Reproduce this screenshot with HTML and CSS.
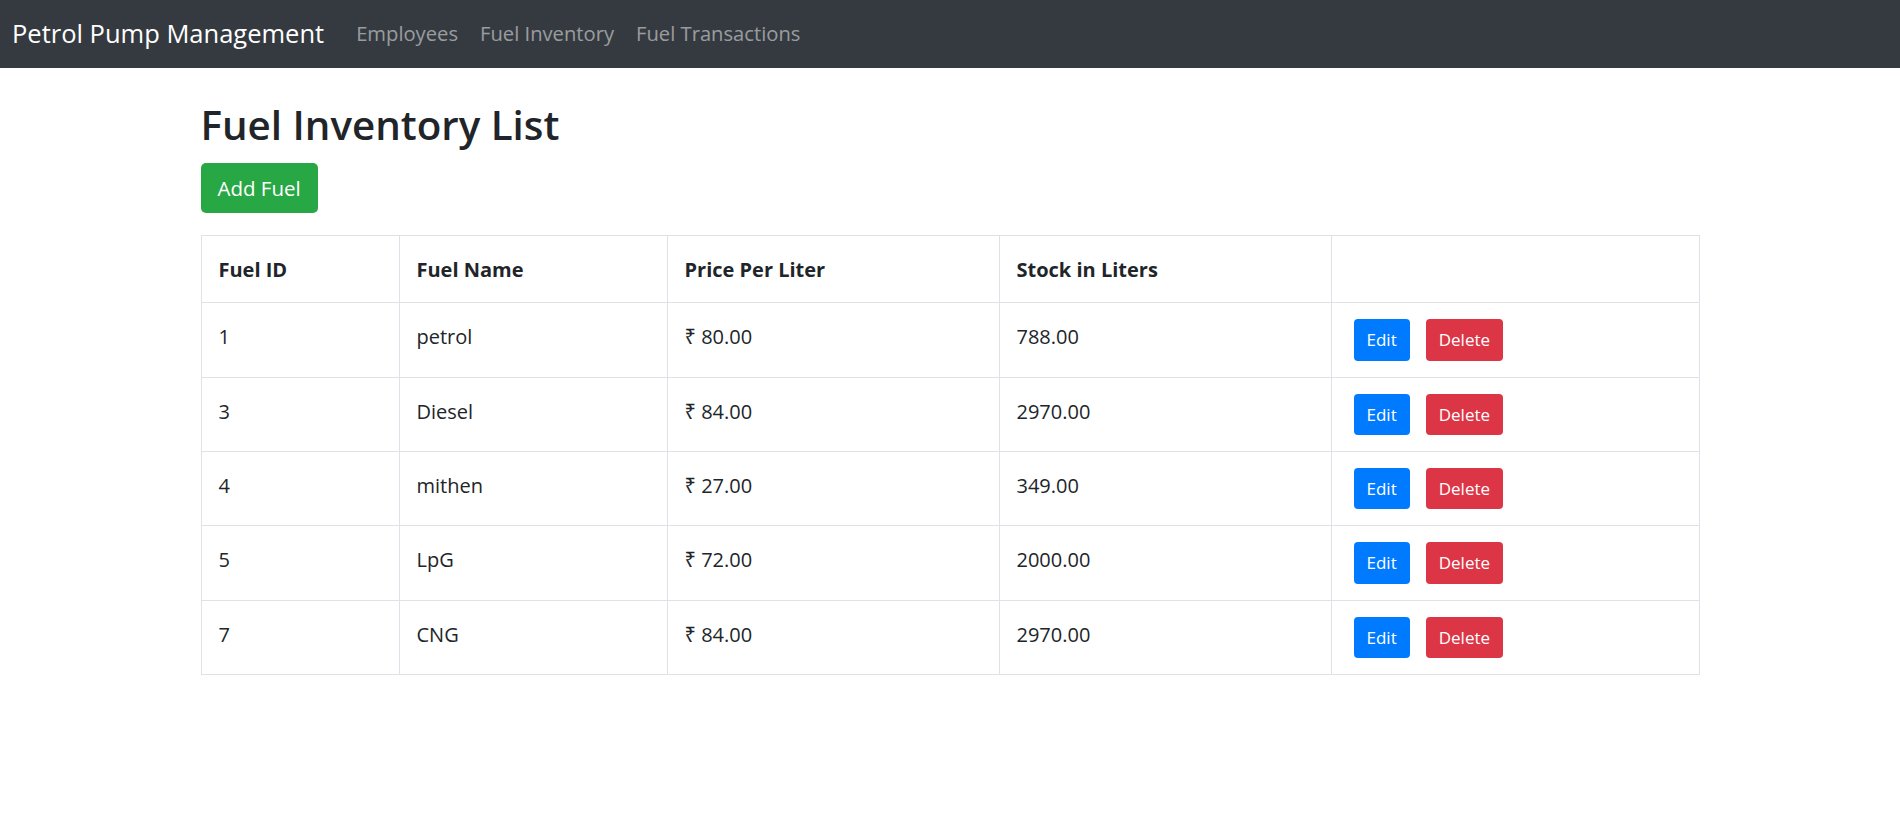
FILE: index.html
```html
<!DOCTYPE html>
<html lang="en">
<head>
<meta charset="utf-8">
<title>Petrol Pump Management</title>
<link rel="stylesheet" href="styles.css">
</head>
<body>
<nav class="navbar">
  <a class="brand" href="#">Petrol Pump Management</a>
  <div class="nav-links">
    <a class="nav-link" href="#">Employees</a>
    <a class="nav-link" href="#">Fuel Inventory</a>
    <a class="nav-link" href="#">Fuel Transactions</a>
  </div>
</nav>
<main class="container">
  <h2 class="title">Fuel Inventory List</h2>
  <button class="btn btn-add">Add Fuel</button>
  <table class="table">
    <colgroup>
      <col class="c1"><col class="c2"><col class="c3"><col class="c4"><col class="c5">
    </colgroup>
    <thead>
      <tr><th>Fuel ID</th><th>Fuel Name</th><th>Price Per Liter</th><th>Stock in Liters</th><th></th></tr>
    </thead>
    <tbody>
      <tr><td>1</td><td>petrol</td><td>₹ 80.00</td><td>788.00</td><td class="actions"><div class="act"><button class="btn-sm btn-edit">Edit</button><button class="btn-sm btn-del">Delete</button></div></td></tr>
      <tr><td>3</td><td>Diesel</td><td>₹ 84.00</td><td>2970.00</td><td class="actions"><div class="act"><button class="btn-sm btn-edit">Edit</button><button class="btn-sm btn-del">Delete</button></div></td></tr>
      <tr><td>4</td><td>mithen</td><td>₹ 27.00</td><td>349.00</td><td class="actions"><div class="act"><button class="btn-sm btn-edit">Edit</button><button class="btn-sm btn-del">Delete</button></div></td></tr>
      <tr><td>5</td><td>LpG</td><td>₹ 72.00</td><td>2000.00</td><td class="actions"><div class="act"><button class="btn-sm btn-edit">Edit</button><button class="btn-sm btn-del">Delete</button></div></td></tr>
      <tr><td>7</td><td>CNG</td><td>₹ 84.00</td><td>2970.00</td><td class="actions"><div class="act"><button class="btn-sm btn-edit">Edit</button><button class="btn-sm btn-del">Delete</button></div></td></tr>
    </tbody>
  </table>
</main>
</body>
</html>
```
FILE: styles.css
```css
* { box-sizing: border-box; }
body {
  margin: 0;
  font-family: "Open Sans", "Noto Sans", sans-serif;
  color: #212529;
  background: #fff;
}
.navbar {
  display: flex;
  align-items: center;
  height: 68px;
  padding: 0 12px 2px;
  background: #343a40;
}
.brand {
  color: #fff;
  text-decoration: none;
  font-size: 25.5px;
  margin-right: 21px;
}
.nav-links { display: flex; }
.nav-link {
  color: rgba(255,255,255,.5);
  text-decoration: none;
  font-size: 20.2px;
  padding: 0 11px;
}
.container {
  width: 1499px;
  margin: 0 auto;
}
.title {
  margin: 33px 0 14px;
  font-size: 40.3px;
  font-weight: 600;
  line-height: 1.2;
}
.btn {
  font-family: inherit;
  border: 0;
  cursor: pointer;
  color: #fff;
}
.btn-add {
  display: block;
  height: 50px;
  padding: 0 17px;
  font-size: 20.5px;
  background: #28a745;
  border-radius: 5px;
}
.table {
  margin-top: 22px;
  width: 100%;
  border-collapse: collapse;
  table-layout: fixed;
  border: 1px solid #dee2e6;
}
.c1 { width: 198px; }
.c2 { width: 268px; }
.c3 { width: 332px; }
.c4 { width: 332px; }
.c5 { width: auto; }
.table th, .table td {
  border: 1px solid #dee2e6;
  padding: 17px 17px 15px;
  text-align: left;
  vertical-align: top;
  font-size: 20px;
  line-height: 33px;
}
.table th { font-weight: 700; padding: 17px 17px 16px; }
.table td.actions { padding: 16px 17px; }
.act {
  display: flex;
  gap: 16px;
  padding-left: 5px;
}
.btn-sm {
  font-family: inherit;
  border: 0;
  color: #fff;
  height: 41.3px;
  padding: 0 13px;
  font-size: 17px;
  border-radius: 4px;
  cursor: pointer;
}
.btn-edit { background: #007bff; }
.btn-del { background: #dc3545; }
```
